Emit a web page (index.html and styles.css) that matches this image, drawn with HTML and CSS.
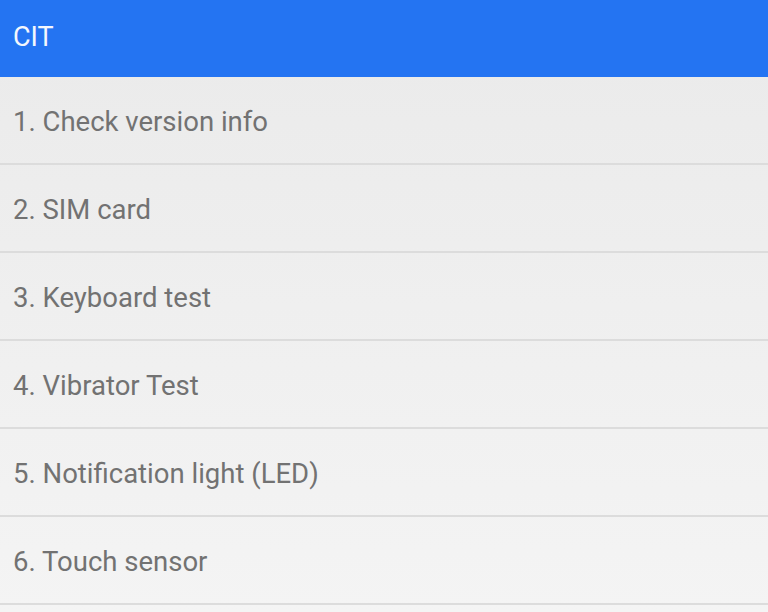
FILE: index.html
```html
<!DOCTYPE html>
<html lang="en">
<head>
    <meta charset="UTF-8">
    <meta name="viewport" content="width=device-width, initial-scale=1.0">
    <title>CIT</title>
    <link rel="stylesheet" href="styles.css">
</head>
<body>
    <header class="toolbar">
        <h1>CIT</h1>
    </header>
    <ul class="test-list">
        <li>1. Check version info</li>
        <li>2. SIM card</li>
        <li>3. Keyboard test</li>
        <li>4. Vibrator Test</li>
        <li>5. Notification light (LED)</li>
        <li>6. Touch sensor</li>
    </ul>
</body>
</html>
```

FILE: styles.css
```css
html, body {
    margin: 0;
    padding: 0;
    height: 100%;
    overflow: hidden;
}
body {
    font-family: Roboto, "Noto Sans", sans-serif;
    background: linear-gradient(#eaeaea, #f4f4f4);
}
.toolbar {
    background-color: #2474f2;
    height: 77px;
    display: flex;
    align-items: center;
    padding: 0 13px 4px;
    box-sizing: border-box;
}
.toolbar h1 {
    margin: 0;
    color: #f4f7fd;
    font-size: 27px;
    font-weight: normal;
}
.test-list {
    list-style: none;
    margin: 0;
    padding: 0;
}
.test-list li {
    height: 88px;
    display: flex;
    align-items: center;
    padding: 2px 13px 0;
    box-sizing: border-box;
    color: #727272;
    font-size: 27.5px;
    border-bottom: 2px solid #dcdcdc;
}
```
